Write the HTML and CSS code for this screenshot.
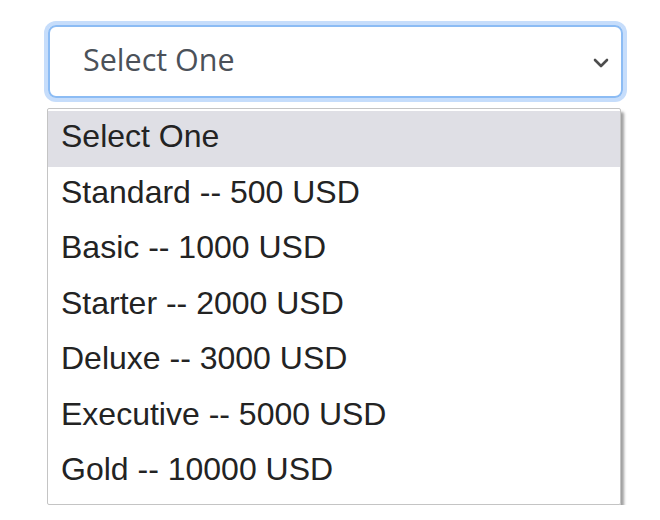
FILE: index.html
```html
<!DOCTYPE html>
<html lang="en">
<head>
  <meta charset="UTF-8" />
  <title>Plan Select</title>
  <link rel="stylesheet" href="styles.css">
</head>
<body>
  <div class="wrap">
    <div class="select-box">
      <span class="select-value">Select One</span>
      <svg class="chevron" width="16" height="10" viewBox="0 0 16 10">
        <path d="M2 2l6 6 6-6" fill="none" stroke="#4d4d4d" stroke-width="2.6" stroke-linecap="round" stroke-linejoin="round"/>
      </svg>
    </div>

    <div class="options">
      <div class="option active">Select One</div>
      <div class="option">Standard -- 500 USD</div>
      <div class="option">Basic -- 1000 USD</div>
      <div class="option">Starter -- 2000 USD</div>
      <div class="option">Deluxe -- 3000 USD</div>
      <div class="option">Executive -- 5000 USD</div>
      <div class="option">Gold -- 10000 USD</div>
    </div>
  </div>
</body>
</html>
```

FILE: styles.css
```css
body { margin: 0; background: #fff; }

.wrap {
  padding: 25px 0 0 48px;
  width: 575px;
}

.select-box {
  box-sizing: border-box;
  height: 73px;
  border: 2px solid #8cbcf4;
  border-radius: 8px;
  box-shadow: 0 0 0 4px #c6ddfb;
  display: flex;
  align-items: center;
  justify-content: space-between;
  padding: 0 10px 5px 33px;
  font-family: "Open Sans", "Noto Sans", sans-serif;
  font-size: 30.5px;
  color: #4b5159;
}

.chevron { margin-right: 2px; margin-top: 8px; }

.options {
  margin: 10px 0 0 -1px;
  width: 572px;
  height: 393px;
  box-sizing: content-box;
  border: 1px solid #c4c4c4;
  border-radius: 2px;
  padding-top: 2px;
  box-shadow: 3px 4px 3px rgba(0, 0, 0, 0.38);
  font-family: "Liberation Sans", Arial, sans-serif;
  font-size: 32px;
  color: #232323;
}

.option {
  height: 55.5px;
  line-height: 51px;
  padding-left: 13px;
  white-space: nowrap;
}

.option.active { background: #dfdfe5; }
```
